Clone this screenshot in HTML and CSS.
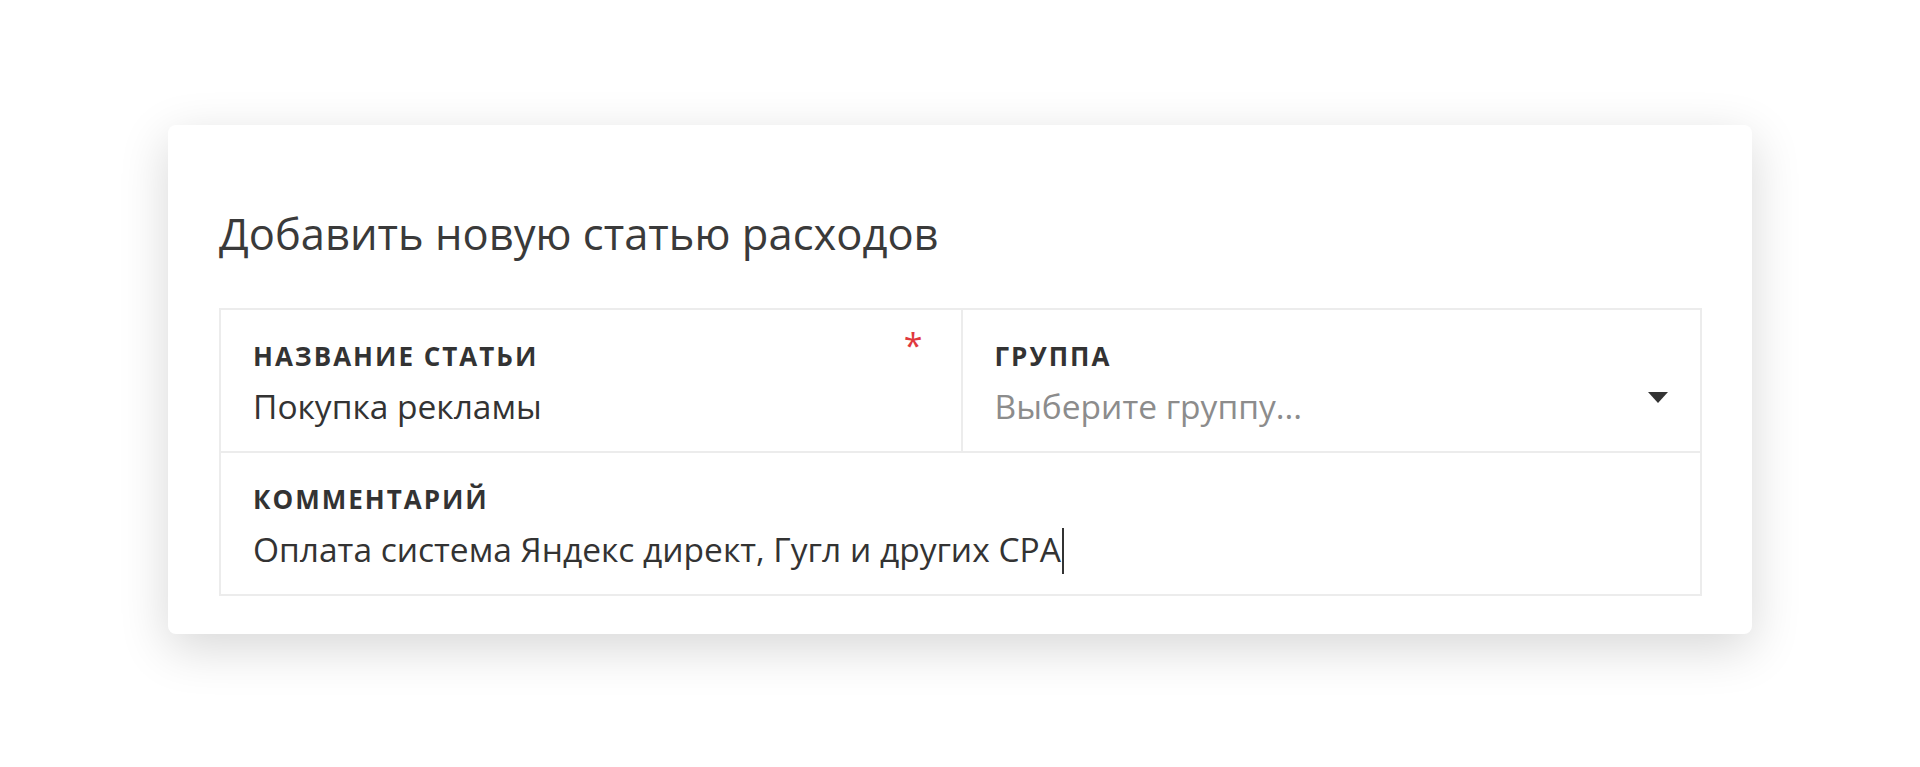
FILE: index.html
```html
<!DOCTYPE html>
<html lang="ru">
<head>
  <meta charset="UTF-8" />
  <meta name="viewport" content="width=device-width, initial-scale=1.0"/>
  <title>Статья расходов</title>
  <link rel="stylesheet" href="styles.css">
</head>
<body>
  <div class="card">
    <h2>Добавить новую статью расходов</h2>

    <div class="fields">
      <div class="field">
        <span class="required">*</span>
        <div class="label">Название статьи</div>
        <div class="value">Покупка рекламы</div>
      </div>
      <div class="field select">
        <div class="label">Группа</div>
        <div class="value placeholder">Выберите группу...</div>
        <span class="arrow"></span>
      </div>
      <div class="field wide">
        <div class="label">Комментарий</div>
        <div class="value">Оплата система Яндекс директ, Гугл и других СРА<span class="caret"></span></div>
      </div>
    </div>
  </div>
</body>
</html>
```

FILE: styles.css
```css
html, body {
  height: 100%;
}

body {
  margin: 0;
  box-sizing: border-box;
  background: #fff;
  font-family: 'Open Sans', sans-serif;
  color: #333;
  padding: 125px 168px 0 168px;
}

.card {
  background: white;
  border-radius: 8px;
  box-shadow: 0 14px 50px rgba(0, 0, 0, 0.16);
  padding: 84px 50px 38px 51px;
}

h2 {
  margin: 0 0 49px 0;
  font-size: 43.5px;
  line-height: 50px;
  font-weight: 400;
  color: #3a3a3a;
}

.fields {
  display: grid;
  grid-template-columns: 1fr 1fr;
  border: 2px solid #ececec;
}

.field {
  position: relative;
  padding: 32px 32px 25px 32px;
}

.field + .field {
  border-left: 2px solid #ececec;
}

.field.wide {
  grid-column: 1 / 3;
  border-left: none;
  border-top: 2px solid #ececec;
}

.label {
  font-size: 26px;
  line-height: 28px;
  font-weight: 700;
  text-transform: uppercase;
  letter-spacing: 2px;
  color: #333;
}

.value {
  margin-top: 16px;
  height: 40px;
  font-size: 33.5px;
  line-height: 40px;
  color: #333;
  white-space: nowrap;
}

.placeholder {
  color: #8c8c8c;
}

.required {
  position: absolute;
  top: 18px;
  right: 38px;
  color: #e0393e;
  font-size: 34px;
  line-height: 34px;
}

.arrow {
  position: absolute;
  right: 32px;
  top: 82px;
  width: 0;
  height: 0;
  border-left: 10px solid transparent;
  border-right: 10px solid transparent;
  border-top: 11px solid #333;
}

.caret {
  display: inline-block;
  width: 2px;
  height: 46px;
  background: #333;
  vertical-align: top;
  margin-top: -1px;
  margin-left: 1px;
}
```
